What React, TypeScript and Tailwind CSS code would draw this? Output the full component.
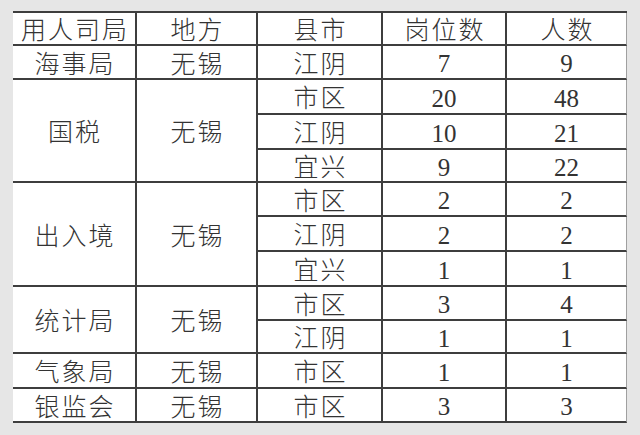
import React from "react";

type Cell = { text: string; rowSpan?: number; last?: boolean };

const rows: Cell[][] = [
  [{ text: "用人司局" }, { text: "地方" }, { text: "县市" }, { text: "岗位数" }, { text: "人数", last: true }],
  [{ text: "海事局" }, { text: "无锡" }, { text: "江阴" }, { text: "7" }, { text: "9", last: true }],
  [{ text: "国税", rowSpan: 3 }, { text: "无锡", rowSpan: 3 }, { text: "市区" }, { text: "20" }, { text: "48", last: true }],
  [{ text: "江阴" }, { text: "10" }, { text: "21", last: true }],
  [{ text: "宜兴" }, { text: "9" }, { text: "22", last: true }],
  [{ text: "出入境", rowSpan: 3 }, { text: "无锡", rowSpan: 3 }, { text: "市区" }, { text: "2" }, { text: "2", last: true }],
  [{ text: "江阴" }, { text: "2" }, { text: "2", last: true }],
  [{ text: "宜兴" }, { text: "1" }, { text: "1", last: true }],
  [{ text: "统计局", rowSpan: 2 }, { text: "无锡", rowSpan: 2 }, { text: "市区" }, { text: "3" }, { text: "4", last: true }],
  [{ text: "江阴" }, { text: "1" }, { text: "1", last: true }],
  [{ text: "气象局" }, { text: "无锡" }, { text: "市区" }, { text: "1" }, { text: "1", last: true }],
  [{ text: "银监会" }, { text: "无锡" }, { text: "市区" }, { text: "3" }, { text: "3", last: true }],
];

export default function App() {
  const cells: React.ReactNode[] = [];
  rows.forEach((r, ri) =>
    r.forEach((c, ci) => {
      const span =
        c.rowSpan === 3 ? "row-span-3" : c.rowSpan === 2 ? "row-span-2" : "";
      const right = c.last
        ? "border-r border-r-[#a0a0a0]"
        : "border-r-2 border-r-[#3e3e3e]";
      const isDigit = /^[0-9]+$/.test(c.text);
      const type = isDigit
        ? "text-[25px] pt-[3px]"
        : "text-[25px] tracking-[2px] pl-[2px] pt-[4px] font-light";
      cells.push(
        <div
          key={`${ri}-${ci}`}
          className={`${span} ${right} ${type} border-b-2 border-b-[#3e3e3e] bg-white flex items-center justify-center leading-none text-[#333333]`}
        >
          {c.text}
        </div>
      );
    })
  );

  return (
    <div
      className="w-[640px] h-[435px] bg-[#e6e6e6] pt-[11px] pl-[13px] overflow-hidden"
      style={{ fontFamily: '"Liberation Serif", "Noto Sans CJK SC", serif' }}
    >
      <div className="grid w-[614px] grid-cols-[124px_121px_125px_124px_120px] grid-rows-[33px_34px_35px_35px_33px_34px_35px_35px_34px_33px_35px_34px] border-t-2 border-t-[#3e3e3e] bg-white">
        {cells}
      </div>
    </div>
  );
}
